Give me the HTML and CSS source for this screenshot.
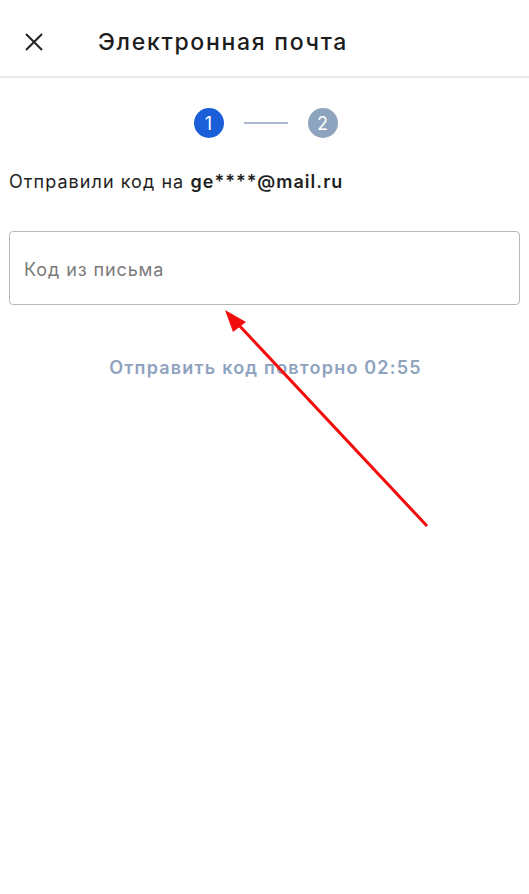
FILE: index.html
```html
<!DOCTYPE html>
<html>

<head>
    <title>Электронная почта</title>
    <meta name="viewport" content="width=device-width, initial-scale=1" charset="UTF-8">
    <link rel="stylesheet" href="styles.css">
</head>

<body>
    <!-- шапка -->
    <div class="header">
        <span class="close">
            <svg width="18" height="18" viewBox="0 0 18 18">
                <path d="M1 1 L17 17 M17 1 L1 17" stroke="#222" stroke-width="2" fill="none" />
            </svg>
        </span>
        <span class="title">Электронная почта</span>
    </div>

    <!-- шаги -->
    <div class="steps">
        <span class="step active">1</span>
        <span class="step-line"></span>
        <span class="step">2</span>
    </div>

    <div class="content">
        <p class="sent">Отправили код на <b>ge****@mail.ru</b></p>

        <label class="input">
            <input type="text" placeholder="Код из письма">
        </label>

        <p class="resend">Отправить код повторно 02:55</p>
    </div>

    <!-- стрелка поверх страницы -->
    <svg class="arrow" width="529" height="894" viewBox="0 0 529 894">
        <line x1="427" y1="526" x2="236" y2="322" stroke="#f20d0d" stroke-width="3" />
        <polygon points="225,310 233,332 246,322" fill="#f20d0d" />
    </svg>
</body>

</html>
```

FILE: styles.css
```css
* {
    box-sizing: border-box;
}

body {
    margin: 0;
    width: 529px;
    height: 894px;
    background: #ffffff;
    font-family: Inter, "Noto Sans", sans-serif;
    color: #1f1f1f;
    position: relative;
}

.header {
    height: 78px;
    display: flex;
    align-items: center;
    border-bottom: 2px solid #e6e8e9;
    padding-left: 25px;
    padding-top: 7px;
}

.close {
    width: 18px;
    height: 18px;
    display: flex;
}

.title {
    margin-left: 55px;
    font-size: 23px;
    font-weight: 500;
    letter-spacing: 1.7px;
    color: #1c1c1c;
}

.steps {
    display: flex;
    justify-content: center;
    align-items: center;
    margin-top: 30px;
    padding-left: 2px;
}

.step {
    width: 30px;
    height: 30px;
    border-radius: 50%;
    background: #8ea3bd;
    color: #ffffff;
    font-size: 18px;
    display: flex;
    align-items: center;
    justify-content: center;
}

.step.active {
    background: #1a5ed8;
}

.step-line {
    width: 44px;
    height: 2px;
    background: #a9b8cc;
    margin: 0 20px;
}

.content {
    padding: 0 9px;
}

.sent {
    margin: 32px 0 0 0;
    font-size: 18px;
    line-height: 24px;
    letter-spacing: 1.05px;
}

.sent b {
    font-weight: 600;
}

.input {
    display: block;
    margin-top: 37px;
}

.input input {
    width: 100%;
    height: 74px;
    border: 1px solid #b9b9b9;
    border-radius: 4px;
    padding: 2px 14px 0 14px;
    font-family: Inter, "Noto Sans", sans-serif;
    font-size: 18px;
    letter-spacing: 0.9px;
    outline: none;
}

.input input::placeholder {
    color: #7a7a7a;
}

.resend {
    margin: 51px 0 0 0;
    text-align: center;
    font-size: 18px;
    line-height: 24px;
    font-weight: 600;
    letter-spacing: 1.2px;
    color: #8fa3bf;
    padding-left: 2px;
}

.arrow {
    position: absolute;
    left: 0;
    top: 0;
}
```
